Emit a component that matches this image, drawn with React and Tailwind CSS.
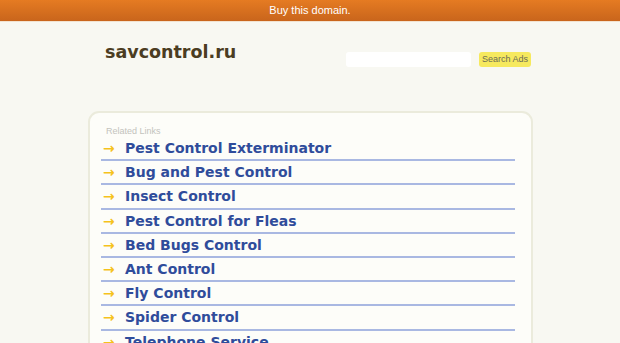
import React from 'react';

const links = [
  'Pest Control Exterminator',
  'Bug and Pest Control',
  'Insect Control',
  'Pest Control for Fleas',
  'Bed Bugs Control',
  'Ant Control',
  'Fly Control',
  'Spider Control',
  'Telephone Service',
];

export default function App() {
  return (
    <div className="min-h-screen bg-[#f8f8f2] overflow-hidden font-['DejaVu_Sans',sans-serif]">
      <div className="h-[22px] bg-gradient-to-b from-[#e57b22] to-[#c9651c] border-b border-[#f3e3d0] flex items-center justify-center">
        <span className="text-white text-[11px] font-['Liberation_Sans',Arial,sans-serif] pb-[1px]">
          Buy this domain.
        </span>
      </div>

      <div className="w-[444px] ml-[88px] flex items-start justify-between pt-[22px]">
        <div className="pl-[17px] text-[17.5px] font-bold text-[#4b3d22] leading-none">
          savcontrol.ru
        </div>
        <div className="flex items-center gap-[8px] mt-[8px] mr-[1px]">
          <div className="w-[125px] h-[15px] bg-white rounded-[3px]" />
          <button className="h-[15px] w-[52px] bg-[#f6e95e] rounded-[3px] text-[9px] text-[#6b6b55] font-['Liberation_Sans',Arial,sans-serif] leading-none">
            Search Ads
          </button>
        </div>
      </div>

      <div className="w-[445px] ml-[88px] mt-[44px] border-2 border-[#ebebdc] rounded-[11px] bg-[#fdfdf9] pl-[11px] pr-[16px] pt-[14px] pb-[20px]">
        <div className="text-[9px] text-[#c3c3bd] pl-[5px] leading-none font-['Liberation_Sans',Arial,sans-serif]">
          Related Links
        </div>
        <div className="mt-[1px]">
          {links.map((t) => (
            <div key={t} className="h-[24.2px] border-b-2 border-[#a9b8e2] flex items-center">
              <span className="w-[24px] pl-[2px] text-[14px] leading-none text-[#f5c21c] font-bold">→</span>
              <span className="text-[14px] font-bold text-[#2f4c9b] leading-none">{t}</span>
            </div>
          ))}
        </div>
      </div>
    </div>
  );
}
